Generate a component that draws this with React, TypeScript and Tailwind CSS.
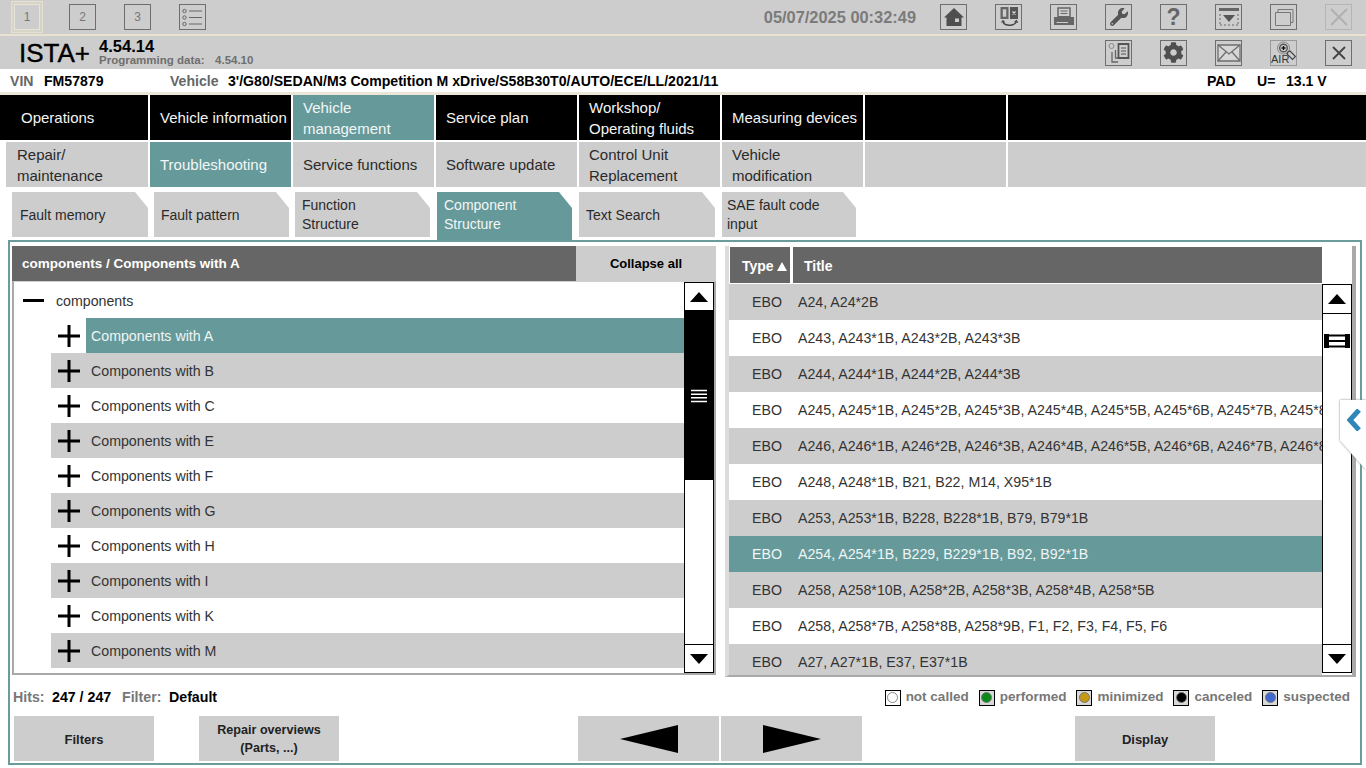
import React from "react";
import { FaCog, FaWrench } from "react-icons/fa";

const navTop = [
  { label: "Operations", w: "w-[148px]", pl: "pl-[21px]" },
  { label: "Vehicle information", w: "w-[141px]", pl: "pl-[10px]" },
  { label: "Vehicle management", w: "w-[141px]", pl: "pl-[10px]", active: true, lines: ["Vehicle", "management"] },
  { label: "Service plan", w: "w-[141px]", pl: "pl-[10px]" },
  { label: "Workshop", w: "w-[141px]", pl: "pl-[10px]", lines: ["Workshop/", "Operating fluids"] },
  { label: "Measuring devices", w: "w-[141px]", pl: "pl-[10px]" },
  { label: "", w: "w-[141px]", pl: "" },
  { label: "", w: "flex-1", pl: "" },
];

const navSub = [
  { label: "Repair", w: "w-[142px] ml-[6px]", pl: "pl-[11px]", lines: ["Repair/", "maintenance"] },
  { label: "Troubleshooting", w: "w-[141px]", pl: "pl-[10px]", active: true },
  { label: "Service functions", w: "w-[141px]", pl: "pl-[10px]" },
  { label: "Software update", w: "w-[141px]", pl: "pl-[10px]" },
  { label: "Control Unit", w: "w-[141px]", pl: "pl-[10px]", lines: ["Control Unit", "Replacement"] },
  { label: "Vehicle", w: "w-[141px]", pl: "pl-[10px]", lines: ["Vehicle", "modification"] },
  { label: "", w: "w-[141px]", pl: "" },
  { label: "", w: "flex-1", pl: "" },
];

const tabs = [
  { lines: ["Fault memory"], w: "w-[136px] ml-[12px] pl-[8px] pt-[2px]" },
  { lines: ["Fault pattern"], w: "w-[135px] ml-[6px] pl-[7px] pt-[2px]" },
  { lines: ["Function", "Structure"], w: "w-[135px] ml-[6px] pl-[7px]" },
  { lines: ["Component", "Structure"], w: "w-[135px] ml-[7px] pl-[7px] pb-[3px]", active: true },
  { lines: ["Text Search"], w: "w-[136px] ml-[7px] pl-[7px] pt-[2px]" },
  { lines: ["SAE fault code", "input"], w: "w-[134px] ml-[7px] pl-[5px]" },
];

const tree = ["A", "B", "C", "E", "F", "G", "H", "I", "K", "M"];

const rows = [
  "A24, A24*2B",
  "A243, A243*1B, A243*2B, A243*3B",
  "A244, A244*1B, A244*2B, A244*3B",
  "A245, A245*1B, A245*2B, A245*3B, A245*4B, A245*5B, A245*6B, A245*7B, A245*8B",
  "A246, A246*1B, A246*2B, A246*3B, A246*4B, A246*5B, A246*6B, A246*7B, A246*8B",
  "A248, A248*1B, B21, B22, M14, X95*1B",
  "A253, A253*1B, B228, B228*1B, B79, B79*1B",
  "A254, A254*1B, B229, B229*1B, B92, B92*1B",
  "A258, A258*10B, A258*2B, A258*3B, A258*4B, A258*5B",
  "A258, A258*7B, A258*8B, A258*9B, F1, F2, F3, F4, F5, F6",
  "A27, A27*1B, E37, E37*1B",
];

const legend = [
  { label: "not called", box: "bg-white", dot: "bg-white border border-[#888]" },
  { label: "performed", box: "bg-[#d8d8d8]", dot: "bg-[#0a8a1a] border border-[#777]" },
  { label: "minimized", box: "bg-[#d8d8d8]", dot: "bg-[#c49a14] border border-[#777]" },
  { label: "canceled", box: "bg-[#d8d8d8]", dot: "bg-black border border-[#777]" },
  { label: "suspected", box: "bg-[#d8d8d8]", dot: "bg-[#3f68d0] border border-[#777]" },
];

function IconBox({ children, className = "" }: { children?: React.ReactNode; className?: string }) {
  return (
    <div className={`w-[27px] h-[26px] border border-[#6e6e6e] flex items-center justify-center text-[#555] ${className}`}>
      {children}
    </div>
  );
}

function Tri({ dir }: { dir: "up" | "down" }) {
  return (
    <svg width="18" height="10" viewBox="0 0 18 10">
      <path d={dir === "up" ? "M9 0 L18 10 L0 10 Z" : "M0 0 L18 0 L9 10 Z"} fill="#000" />
    </svg>
  );
}

function Cell({ item, dark }: { item: any; dark: boolean }) {
  const bg = item.active ? "bg-[#669a9a] text-[#f2f6f6]" : dark ? "bg-black text-[#f4f4f4]" : "bg-[#cdcdcd] text-[#2a2a2a]";
  return (
    <div className={`${item.w} ${item.pl} ${bg} h-[45px] flex flex-col justify-center text-[15px] leading-[21px]`}>
      {item.lines ? item.lines.map((l: string) => <span key={l}>{l}</span>) : <span className="whitespace-nowrap">{item.label}</span>}
    </div>
  );
}

export default function App() {
  return (
    <div className="relative w-[1366px] h-[768px] overflow-hidden bg-white flex flex-col font-['Liberation_Sans',Arial,sans-serif]">
      {/* top toolbar */}
      <div className="h-[34px] bg-[#cdcdcd] flex items-center shrink-0">
        <div className="ml-[11px] p-[2px] border border-[#e6e1cf] bg-[#d6d4c8]">
          <div className="w-[26px] h-[26px] border border-[#e8e4d4] bg-[#cdcdcd] flex items-center justify-center text-[12px] text-[#777]">1</div>
        </div>
        <IconBox className="ml-[26px] text-[12px] text-[#777]">2</IconBox>
        <IconBox className="ml-[28px] text-[12px] text-[#777]">3</IconBox>
        <IconBox className="ml-[28px]">
          <svg width="23" height="22" viewBox="0 0 23 22" fill="none" stroke="#666">
            <circle cx="3.5" cy="5" r="1.7" />
            <circle cx="3.5" cy="11.5" r="1.7" />
            <circle cx="3.5" cy="18" r="1.7" />
            <path d="M8 5H21M8 11.5H21M8 18H21" />
          </svg>
        </IconBox>
        <span className="ml-auto text-[16.4px] font-bold text-[#7b7b7b] whitespace-nowrap">05/07/2025 00:32:49</span>
        <div className="flex gap-[28px] ml-[24px] mr-[14px]">
          <IconBox>
            <svg width="22" height="22" viewBox="0 0 22 22">
              <path d="M11 2L21 11.5H18.5V20H3.5V11.5H1Z" fill="#4f4f4f" />
              <rect x="6.5" y="14" width="4" height="6" fill="#4f4f4f" />
              <rect x="12" y="12.5" width="4" height="3.5" fill="#cdcdcd" />
            </svg>
          </IconBox>
          <IconBox>
            <svg width="24" height="24" viewBox="0 0 24 24" fill="none">
              <rect x="3.5" y="2" width="8" height="12" fill="#666" />
              <rect x="5.5" y="4" width="4" height="8" fill="#cdcdcd" stroke="#666" strokeWidth="0.6" />
              <rect x="13" y="2" width="8" height="12" fill="#555" />
              <path d="M15.5 6.5l3 3M18.5 6.5l-3 3" stroke="#e2e2e2" strokeWidth="1.1" />
              <path d="M6 16c0 5 11 6 13.5 0.5" stroke="#444" strokeWidth="1.5" />
              <path d="M4.5 17.5L6 15.5l1.8 2M17.5 17l2-1.5 1.2 2.2" stroke="#444" strokeWidth="1.1" />
            </svg>
          </IconBox>
          <IconBox>
            <svg width="24" height="24" viewBox="0 0 24 24">
              <path d="M6 3h12v9H6z" fill="#cdcdcd" stroke="#666" strokeWidth="1.5" />
              <path d="M8.5 6h7M8.5 8.5h7" stroke="#666" />
              <path d="M2 12h4v-1h12v1h4v8H2z" fill="#666" />
              <path d="M4.5 17.5H16" stroke="#cdcdcd" />
            </svg>
          </IconBox>
          <IconBox><FaWrench size={18} color="#555" /></IconBox>
          <IconBox><span className="text-[23px] font-bold leading-none text-[#666]">?</span></IconBox>
          <IconBox>
            <svg width="24" height="24" viewBox="0 0 24 24" fill="none">
              <path d="M2 3h20v3H2z" fill="#666" />
              <path d="M3 9v10M21 9v10M3 20h18" stroke="#666" strokeDasharray="2 2" />
              <path d="M6 10h12l-6 7z" fill="#555" />
            </svg>
          </IconBox>
          <IconBox>
            <svg width="22" height="22" viewBox="0 0 22 22" fill="none" stroke="#777">
              <path d="M2.5 6.5h15v13h-15z" />
              <path d="M5 6V3.5h15v13h-2.5" />
            </svg>
          </IconBox>
          <IconBox className="border-[#b5b5b5]">
            <svg width="20" height="20" viewBox="0 0 20 20"><path d="M2 2L18 18M18 2L2 18" stroke="#b0b0b0" strokeWidth="2" /></svg>
          </IconBox>
        </div>
      </div>
      <div className="h-[2px] bg-[#e9e2d3] shrink-0" />

      {/* title bar */}
      <div className="h-[33px] bg-[#cdcdcd] flex items-center shrink-0">
        <span className="ml-[19px] text-[26px] text-black leading-none [-webkit-text-stroke:0.4px_#000]">ISTA+</span>
        <div className="ml-[10px] pt-[1px] flex flex-col">
          <span className="text-[16.5px] font-bold leading-[15px] text-black -ml-px">4.54.14</span>
          <div className="flex text-[11.5px] font-bold leading-[13px] text-[#6f6f6f] whitespace-nowrap -ml-px">
            <span className="w-[116px]">Programming data:</span>
            <span>4.54.10</span>
          </div>
        </div>
        <div className="ml-auto flex gap-[28px] mr-[14px]">
          <IconBox>
            <svg width="24" height="24" viewBox="0 0 24 24" fill="none" stroke="#555">
              <circle cx="4.5" cy="5" r="2.5" stroke="#888" />
              <path d="M5 11v10h6M8.5 9v8h4" stroke="#666" strokeWidth="1.3" />
              <path d="M11.5 3h10v14h-10z" fill="#cdcdcd" strokeWidth="1.8" />
              <path d="M14 7h5M14 10h5M14 13h5" strokeWidth="1.2" />
            </svg>
          </IconBox>
          <IconBox><FaCog size={21} color="#4f4f4f" /></IconBox>
          <IconBox>
            <svg width="24" height="18" viewBox="0 0 24 18" fill="#d6d6d6" stroke="#6e6e6e" strokeWidth="1.3">
              <path d="M1 1h22v16H1z" />
              <path d="M1 1l11 9 11-9M1 17l8-9M23 17l-8-9" fill="none" />
            </svg>
          </IconBox>
          <IconBox className="border-[#999]">
            <div className="relative w-[25px] h-[24px]">
              <svg width="25" height="24" viewBox="0 0 25 24" fill="none">
                <circle cx="12.5" cy="7" r="6" stroke="#888" />
                <circle cx="12.5" cy="7" r="3.8" stroke="#555" strokeWidth="1.4" />
                <path d="M10.5 7h4M12.5 5v4" stroke="#111" strokeWidth="1.3" />
                <path d="M17 11l2-1 5.5 5.5-3 3L16 13z" fill="#cdcdcd" stroke="#444" strokeWidth="1.2" />
              </svg>
              <span className="absolute left-0 bottom-0 text-[11px] leading-none text-[#333]">AIR</span>
            </div>
          </IconBox>
          <IconBox>
            <svg width="16" height="16" viewBox="0 0 16 16"><path d="M2 2L14 14M14 2L2 14" stroke="#444" strokeWidth="1.8" /></svg>
          </IconBox>
        </div>
      </div>

      {/* vehicle row */}
      <div className="h-[23px] pt-[3px] bg-white flex items-center text-[14.1px] font-bold whitespace-nowrap shrink-0">
        <span className="ml-[10px] w-[34px] text-[#666]">VIN</span>
        <span className="w-[126px] text-black">FM57879</span>
        <span className="w-[58px] text-[#666]">Vehicle</span>
        <span className="text-black">3'/G80/SEDAN/M3 Competition M xDrive/S58B30T0/AUTO/ECE/LL/2021/11</span>
        <span className="ml-auto w-[50px] text-black">PAD</span>
        <span className="w-[29px] text-black">U=</span>
        <span className="w-[80px] text-black">13.1 V</span>
      </div>
      <div className="h-[3px] bg-[#ece6d8] shrink-0" />

      {/* main nav */}
      <div className="flex gap-[2px] h-[45px] mt-0 shrink-0">
        {navTop.map((n, i) => <Cell key={i} item={n} dark />)}
      </div>
      <div className="flex gap-[2px] h-[45px] mt-[2px] shrink-0">
        {navSub.map((n, i) => <Cell key={i} item={n} dark={false} />)}
      </div>

      {/* tabs */}
      <div className="flex mt-[5px] h-[48px] shrink-0 relative z-10">
        {tabs.map((t) => (
          <div
            key={t.lines[0]}
            className={`${t.w} ${t.active ? "h-[48px] bg-[#669a9a] text-[#f2f6f6]" : "h-[45px] bg-[#cdcdcd] text-[#2a2a2a]"} flex flex-col justify-center text-[14px] leading-[19px] [clip-path:polygon(0_0,calc(100%-13px)_0,100%_16px,100%_100%,0_100%)]`}
          >
            {t.lines.map((l) => <span key={l} className="whitespace-nowrap">{l}</span>)}
          </div>
        ))}
      </div>

      {/* main frame */}
      <div className="mx-[8px] w-[1354px] h-[525px] border-2 border-[#6a9c9c] flex flex-col shrink-0">
        <div className="flex h-[435px] shrink-0">
          {/* left tree */}
          <div className="ml-[2px] mt-[4px] w-[704px] flex flex-col">
            <div className="flex h-[35px] shrink-0">
              <div className="w-[564px] pt-[2px] bg-[#666666] text-white text-[13.5px] font-bold flex items-center pl-[10px]">components / Components with A</div>
              <div className="flex-1 bg-[#cdcdcd] text-black text-[13px] font-bold flex items-center justify-center">Collapse all</div>
            </div>
            <div className="flex h-[394px] border-2 border-t border-[#a9a9a9] border-t-[#d0d0d0] bg-white">
              <div className="flex-1 min-w-0">
                <div className="h-[36px] flex items-center text-[14.2px] text-[#333]">
                  <div className="ml-[9px] w-[21px] h-[3px] bg-black" />
                  <span className="ml-[12px] pt-[4px]">components</span>
                </div>
                {tree.map((t, i) => {
                  const sel = i === 0;
                  const gray = i % 2 === 1;
                  return (
                    <div key={t} className={`ml-[37px] h-[35px] flex items-center text-[14.2px] ${gray ? "bg-[#cdcdcd]" : "bg-white"}`}>
                      <div className="w-[35px] h-full flex items-center justify-center">
                        <svg width="22" height="22" viewBox="0 0 22 22"><path d="M0 11H22M11 0V22" stroke="#000" strokeWidth="3" /></svg>
                      </div>
                      <div className={`flex-1 h-full flex items-center pl-[5px] pt-[2px] ${sel ? "bg-[#669a9a] text-[#f0f5f5]" : "text-[#333]"}`}>Components with {t}</div>
                    </div>
                  );
                })}
              </div>
              <div className="w-[30px] border border-black flex flex-col bg-white">
                <div className="h-[28px] flex items-center justify-center shrink-0 border-b border-black"><Tri dir="up" /></div>
                <div className="h-[169px] bg-black flex items-center justify-center shrink-0">
                  <svg width="16" height="14" viewBox="0 0 16 14"><path d="M0 1.5H16M0 5.2H16M0 8.8H16M0 12.5H16" stroke="#fff" strokeWidth="1.5" /></svg>
                </div>
                <div className="flex-1" />
                <div className="h-[28px] flex items-center justify-center shrink-0 border-t border-black"><Tri dir="down" /></div>
              </div>
            </div>
          </div>

          {/* right table */}
          <div className="ml-[9px] mt-[4px] w-[631px] h-[431px] border-l-[4px] border-r-[4px] border-b-2 border-l-[#dcdcdc] border-r-[#a9a9a9] border-b-[#a9a9a9] flex flex-col overflow-hidden">
            <div className="flex h-[38px] shrink-0 py-[1px]">
              <div className="w-[60px] ml-[1px] pl-[12px] pt-[2px] bg-[#666666] text-white text-[14px] font-bold flex items-center gap-[3px]">
                Type
                <svg width="10" height="9" viewBox="0 0 10 9"><path d="M5 0L10 9H0Z" fill="#fff" /></svg>
              </div>
              <div className="w-[529px] ml-[3px] pt-[2px] bg-[#666666] text-white text-[14px] font-bold flex items-center pl-[11px]">Title</div>
            </div>
            <div className="flex flex-1 min-h-0">
              <div className="w-[593px] overflow-hidden">
                {rows.map((r, i) => {
                  const sel = i === 7;
                  const gray = i % 2 === 0;
                  return (
                    <div key={r} className={`h-[36px] pt-[2px] flex items-center text-[14.2px] whitespace-nowrap ${sel ? "bg-[#669a9a] text-[#f0f5f5]" : gray ? "bg-[#cdcdcd] text-[#333]" : "bg-white text-[#333]"}`}>
                      <span className="w-[69px] shrink-0 text-right pr-[16px]">EBO</span>
                      <span>{r}</span>
                    </div>
                  );
                })}
              </div>
              <div className="w-[30px] h-[389px] border border-black flex flex-col bg-white">
                <div className="h-[29px] flex items-center justify-center shrink-0 border-b border-black"><Tri dir="up" /></div>
                <div className="pt-[20px] flex justify-center">
                  <svg width="26" height="14" viewBox="0 0 26 14">
                    <path d="M0 0H5V14H0ZM21 0H26V14H21Z" fill="#000" />
                    <path d="M5 1.5H21M5 7H21M5 12.5H21" stroke="#000" strokeWidth="2" />
                  </svg>
                </div>
                <div className="flex-1" />
                <div className="h-[28px] flex items-center justify-center shrink-0 border-t border-black"><Tri dir="down" /></div>
              </div>
            </div>
          </div>
        </div>

        {/* status line */}
        <div className="h-[39px] pt-[2px] flex items-center text-[14.2px] font-bold whitespace-nowrap shrink-0">
          <span className="ml-[3px] w-[39px] text-[#777]">Hits:</span>
          <span className="w-[70px] text-black">247 / 247</span>
          <span className="w-[47px] text-[#777]">Filter:</span>
          <span className="text-black">Default</span>
          <div className="ml-auto mr-[10px] flex items-center gap-[10px] text-[13.5px]">
            {legend.map((l) => (
              <div key={l.label} className="flex items-center gap-[5px]">
                <div className={`w-[16px] h-[16px] border border-black flex items-center justify-center ${l.box}`}>
                  <div className={`w-[11px] h-[11px] rounded-full ${l.dot}`} />
                </div>
                <span className="text-[#777]">{l.label}</span>
              </div>
            ))}
          </div>
        </div>

        {/* bottom buttons */}
        <div className="flex h-[45px] text-[13px] font-bold text-[#222] shrink-0">
          <div className="ml-[4px] w-[140px] pt-[2px] bg-[#cdcdcd] flex items-center justify-center">Filters</div>
          <div className="ml-[45px] w-[140px] text-[12.6px] bg-[#cdcdcd] flex flex-col items-center justify-center leading-[18px]">
            <span>Repair overviews</span>
            <span>(Parts, ...)</span>
          </div>
          <div className="ml-[239px] w-[141px] bg-[#cdcdcd] flex items-center justify-center">
            <svg width="58" height="28" viewBox="0 0 58 28"><path d="M0 14L58 0V28Z" fill="#000" /></svg>
          </div>
          <div className="ml-[2px] w-[141px] bg-[#cdcdcd] flex items-center justify-center">
            <svg width="58" height="28" viewBox="0 0 58 28"><path d="M58 14L0 0V28Z" fill="#000" /></svg>
          </div>
          <div className="ml-[213px] w-[140px] pt-[2px] bg-[#cdcdcd] flex items-center justify-center">Display</div>
        </div>
      </div>

      {/* side handle */}
      <div className="absolute left-[1340px] top-[400px] w-[26px] h-[70px] drop-shadow-[0_0_1px_#888]">
        <div className="w-full h-full bg-white [clip-path:polygon(0_0,100%_0,100%_100%,0_58%)] flex justify-center pt-[9px] pl-[4px]">
          <svg width="16" height="22" viewBox="0 0 16 22"><path d="M12 1L3 11L12 21" fill="none" stroke="#2f86b8" strokeWidth="5" /></svg>
        </div>
      </div>
    </div>
  );
}
